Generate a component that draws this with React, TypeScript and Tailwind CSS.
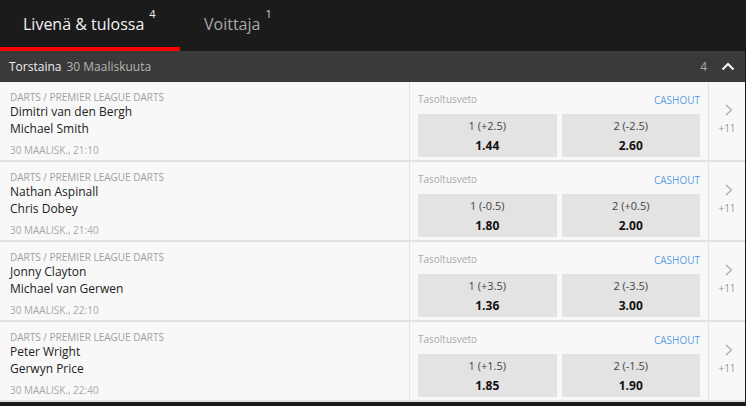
import React from "react";

type Match = {
  home: string;
  away: string;
  time: string;
  odds: [string, string, string, string];
};

const matches: Match[] = [
  { home: "Dimitri van den Bergh", away: "Michael Smith", time: "30 MAALISK., 21:10", odds: ["1 (+2.5)", "1.44", "2 (-2.5)", "2.60"] },
  { home: "Nathan Aspinall", away: "Chris Dobey", time: "30 MAALISK., 21:40", odds: ["1 (-0.5)", "1.80", "2 (+0.5)", "2.00"] },
  { home: "Jonny Clayton", away: "Michael van Gerwen", time: "30 MAALISK., 22:10", odds: ["1 (+3.5)", "1.36", "2 (-3.5)", "3.00"] },
  { home: "Peter Wright", away: "Gerwyn Price", time: "30 MAALISK., 22:40", odds: ["1 (+1.5)", "1.85", "2 (-1.5)", "1.90"] },
];

function OddButton({ label, price }: { label: string; price: string }) {
  return (
    <button
      type="button"
      className="w-[140px] h-[43px] bg-[#e3e3e3] flex flex-col items-center pt-[4px]"
    >
      <span className="text-[11px] leading-[16px] text-[#444]">{label}</span>
      <span className="text-[12px] leading-[20px] font-bold text-[#111] mt-[2px]">{price}</span>
    </button>
  );
}

function Row({ m }: { m: Match }) {
  return (
    <div className="h-[80px] flex bg-[#f8f8f8] border-b-2 border-[#e2e2e2]">
      {/* teams */}
      <div className="w-[410px] pl-[10px] pt-[9px] border-r border-[#e4e4e4]">
        <div className="text-[10px] leading-[12px] text-[#a0a0a0] uppercase">Darts / Premier League Darts</div>
        <div className="text-[12px] leading-[16px] text-[#222] mt-[1px]">{m.home}</div>
        <div className="text-[12px] leading-[16px] text-[#222] mt-[1px]">{m.away}</div>
        <div className="text-[10px] leading-[12px] text-[#a8a8a8] mt-[7px]">{m.time}</div>
      </div>

      {/* market */}
      <div className="w-[299px] pl-[8px] pr-[8px] pt-[10px] border-r border-[#e4e4e4]">
        <div className="flex items-center justify-between h-[14px]">
          <span className="text-[10px] text-[#a8a8a8]">Tasoltusveto</span>
          <span className="text-[10px] text-[#5a9de6] mt-[2px]">CASHOUT</span>
        </div>
        <div className="flex gap-[5px] mt-[8px]">
          <OddButton label={m.odds[0]} price={m.odds[1]} />
          <OddButton label={m.odds[2]} price={m.odds[3]} />
        </div>
      </div>

      {/* more */}
      <div className="flex-1 flex flex-col items-center pt-[22px]">
        <svg width="8" height="12" viewBox="0 0 8 12" className="ml-[3px]">
          <path d="M1 1l5.5 5-5.5 5" fill="none" stroke="#9aa6b6" strokeWidth="1.1" />
        </svg>
        <span className="text-[10px] leading-[12px] text-[#999] mt-[6px]">+11</span>
      </div>
    </div>
  );
}

export default function App() {
  return (
    <div
      className="w-[746px] h-[406px] bg-[#1a1a1a] overflow-hidden"
      style={{ fontFamily: '"Open Sans", "Noto Sans", sans-serif' }}
    >
      <div className="w-[745px]">
        {/* tabs */}
        <div className="h-[51px] bg-[#1b1b1b] flex">
          <div className="w-[180px] flex flex-col">
            <div className="flex-1 flex items-center pl-[23px] text-[16px] text-[#f2f2f2]">
              Livenä &amp; tulossa
              <sup className="text-[11px] ml-[5px] -mt-[8px]">4</sup>
            </div>
            <div className="h-[4px] bg-[#ff0000]" />
          </div>
          <div className="flex items-center pl-[24px] pb-[4px] text-[16px] text-[#a8a8a8]">
            Voittaja
            <sup className="text-[11px] ml-[5px] -mt-[8px] text-[#cfcfcf]">1</sup>
          </div>
        </div>

        {/* day header */}
        <div className="h-[31px] bg-[#3a3a3a] flex items-center pl-[9px] pr-[10px]">
          <span className="text-[12px] text-[#eee]">Torstaina</span>
          <span className="text-[12px] text-[#b5b5b5] ml-[5px]">30 Maaliskuuta</span>
          <span className="ml-auto text-[12px] text-[#aaa] mr-[14px]">4</span>
          <svg width="14" height="9" viewBox="0 0 14 9">
            <path d="M1.5 7.5L7 2l5.5 5.5" fill="none" stroke="#f2f2f2" strokeWidth="2.2" />
          </svg>
        </div>

        {matches.map((m) => (
          <Row key={m.home} m={m} />
        ))}
      </div>
    </div>
  );
}
